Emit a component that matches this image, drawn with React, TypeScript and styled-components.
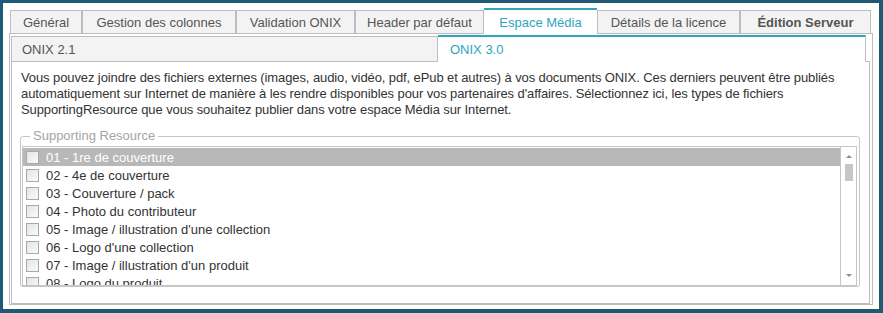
import styled, { createGlobalStyle } from "styled-components";

const TEAL = "#2ea6c0";
const LINE = "#bdbdbd";

const GlobalStyle = createGlobalStyle`
  html, body {
    margin: 0;
    background: #1f5a74;
    font-family: "Liberation Sans", Arial, sans-serif;
  }
`;

// white window inside the dark frame
const Window = styled.div`
  margin: 3px 4px 4px 3px;
  height: 306px;
  box-sizing: border-box;
  background: #fff;
  padding: 5px 6px 0 6px;
`;

const TabStrip = styled.div`
  display: flex;
  align-items: flex-end;
  height: 25px;
  padding-left: 1px;
`;

const Tab = styled.div<{ $w: number; $active?: boolean; $bold?: boolean }>`
  box-sizing: border-box;
  width: ${(p) => p.$w}px;
  height: ${(p) => (p.$active ? 26 : 23)}px;
  display: flex;
  align-items: center;
  justify-content: center;
  font-size: 13px;
  font-weight: ${(p) => (p.$bold ? 700 : 400)};
  color: ${(p) => (p.$active ? TEAL : "#555")};
  background: ${(p) => (p.$active ? "#fff" : "#f3f3f3")};
  border: 1px solid ${LINE};
  border-bottom: none;
  ${(p) =>
    p.$active &&
    `
    border-top: 2px solid ${TEAL};
    border-left: none;
    border-right: none;
    margin-bottom: -1px;
    position: relative;
    z-index: 1;
  `}
`;

const Panel = styled.div`
  box-sizing: border-box;
  width: 864px;
  height: 272px;
  border: 1px solid ${LINE};
  padding: 1px 2px 0 1px;
  display: flex;
  flex-direction: column;
`;

const SubTabs = styled.div`
  display: flex;
  align-items: flex-end;
  height: 26px;
  margin-right: 4px;
`;

const SubTab = styled.div<{ $active?: boolean }>`
  box-sizing: border-box;
  flex: 1;
  height: ${(p) => (p.$active ? 27 : 25)}px;
  display: flex;
  align-items: center;
  font-size: 13px;
  color: ${(p) => (p.$active ? TEAL : "#555")};
  background: ${(p) => (p.$active ? "#fff" : "#f3f3f3")};
  padding-left: ${(p) => (p.$active ? 12 : 10)}px;
  border: 1px solid ${LINE};
  border-bottom: none;
  ${(p) =>
    p.$active &&
    `
    border-top: 2px solid ${TEAL};
    border-left: none;
    margin-bottom: -1px;
    position: relative;
    z-index: 1;
  `}
`;

const SubPanel = styled.div`
  flex: 1;
  border: 1px solid ${LINE};
  padding: 8px 10px 0 9px;
`;

const Intro = styled.p`
  margin: 0 0 10px;
  font-size: 13px;
  line-height: 16px;
  letter-spacing: -0.1px;
  color: #333;
`;

const Group = styled.fieldset`
  margin: 0 -1px 0 -1px;
  padding: 2px 2px 0 1px;
  min-width: 0;
  border: 1px solid #c6c6c6;
  border-radius: 3px;
`;

const Legend = styled.legend`
  margin-left: 8px;
  padding: 0 3px;
  font-size: 13px;
  line-height: 16px;
  color: #a5a5a5;
`;

const ListBox = styled.div`
  box-sizing: border-box;
  height: 140px;
  border: 1px solid #c6c6c6;
  display: flex;
`;

const Rows = styled.div`
  flex: 1;
  overflow: hidden;
  padding-top: 1px;
`;

const Row = styled.div<{ $selected?: boolean }>`
  height: 18px;
  display: flex;
  align-items: center;
  gap: 7px;
  padding-left: 3px;
  font-size: 13px;
  color: ${(p) => (p.$selected ? "#fff" : "#333")};
  background: ${(p) => (p.$selected ? "#b8b8b8" : "transparent")};
  white-space: nowrap;
`;

const Check = styled.span`
  box-sizing: border-box;
  width: 13px;
  height: 13px;
  flex: none;
  border: 1px solid #a8a8a8;
  background: linear-gradient(135deg, #e4e4e4, #fbfbfb);
`;

const ScrollBar = styled.div`
  width: 16px;
  border-left: 1px solid #c6c6c6;
  display: flex;
  flex-direction: column;
  align-items: center;
  padding: 8px 0 8px;
  box-sizing: border-box;
`;

const Arrow = styled.span<{ $down?: boolean }>`
  width: 0;
  height: 0;
  border-left: 3px solid transparent;
  border-right: 3px solid transparent;
  ${(p) =>
    p.$down
      ? "border-top: 3px solid #8f8f8f; margin-top: auto;"
      : "border-bottom: 3px solid #8f8f8f;"}
`;

const Thumb = styled.span`
  width: 8px;
  height: 17px;
  margin-top: 6px;
  background: #c6c6c6;
`;

const tabs = [
  { label: "Général", w: 72 },
  { label: "Gestion des colonnes", w: 154 },
  { label: "Validation ONIX", w: 119 },
  { label: "Header par défaut", w: 129 },
  { label: "Espace Média", w: 113, active: true },
  { label: "Détails de la licence", w: 143 },
  { label: "Édition Serveur", w: 131, bold: true },
];

const resources = [
  "01 - 1re de couverture",
  "02 - 4e de couverture",
  "03 - Couverture / pack",
  "04 - Photo du contributeur",
  "05 - Image / illustration d'une collection",
  "06 - Logo d'une collection",
  "07 - Image / illustration d'un produit",
  "08 - Logo du produit",
];

const App = () => {
  return (
    <>
      <GlobalStyle />
      <Window>
        <TabStrip>
          {tabs.map((t) => (
            <Tab key={t.label} $w={t.w} $active={t.active} $bold={t.bold}>
              {t.label}
            </Tab>
          ))}
        </TabStrip>

        <Panel>
          <SubTabs>
            <SubTab>ONIX 2.1</SubTab>
            <SubTab $active>ONIX 3.0</SubTab>
          </SubTabs>

          <SubPanel>
            <Intro>
              Vous pouvez joindre des fichiers externes (images, audio, vidéo,
              pdf, ePub et autres) à vos documents ONIX. Ces derniers peuvent
              être publiés automatiquement sur Internet de manière à les rendre
              disponibles pour vos partenaires d'affaires. Sélectionnez ici, les
              types de fichiers SupportingResource que vous souhaitez publier
              dans votre espace Média sur Internet.
            </Intro>

            {/* Supporting resource picker */}
            <Group>
              <Legend>Supporting Resource</Legend>
              <ListBox>
                <Rows>
                  {resources.map((r, i) => (
                    <Row key={r} $selected={i === 0}>
                      <Check />
                      {r}
                    </Row>
                  ))}
                </Rows>
                <ScrollBar>
                  <Arrow />
                  <Thumb />
                  <Arrow $down />
                </ScrollBar>
              </ListBox>
            </Group>
          </SubPanel>
        </Panel>
      </Window>
    </>
  );
};

export default App;
